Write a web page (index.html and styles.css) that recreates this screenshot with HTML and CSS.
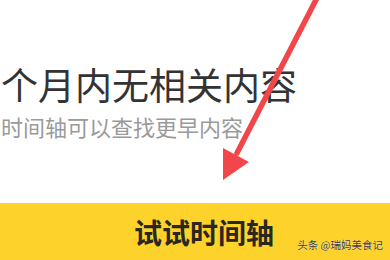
FILE: index.html
```html
<!DOCTYPE html>
<html lang="zh">
<head>
<meta charset="utf-8">
<link rel="stylesheet" href="styles.css">
</head>
<body>
<div class="page">
  <div class="content">
    <div class="title">个月内无相关内容</div>
    <div class="sub">时间轴可以查找更早内容</div>
  </div>
  <div class="bar">
    <span class="bar-text">试试时间轴</span>
    <span class="mark">头条 @瑞妈美食记</span>
  </div>
  <svg class="arrow" width="390" height="200" viewBox="0 0 390 200">
    <line x1="318" y1="-4" x2="237" y2="153" stroke="#f2474a" stroke-width="5.5" stroke-linecap="round"/>
    <polygon points="223,180 223,148 249,162" fill="#f2474a"/>
  </svg>
</div>
</body>
</html>
```

FILE: styles.css
```css
html, body {
  margin: 0;
  padding: 0;
  background: #ffffff;
}
.page {
  position: relative;
  width: 390px;
  height: 260px;
  overflow: hidden;
  font-family: "Noto Sans CJK SC", "Noto Sans", sans-serif;
  display: flex;
  flex-direction: column;
}
.content {
  height: 203px;
  padding-top: 66px;
  box-sizing: border-box;
  padding-left: 1px;
}
.title {
  font-size: 37px;
  line-height: 37px;
  color: #333333;
  white-space: nowrap;
}
.sub {
  margin-top: 12px;
  font-size: 22px;
  line-height: 22px;
  color: #9a9a9a;
  white-space: nowrap;
}
.bar {
  position: relative;
  flex: 1;
  background: #fdd22a;
  display: flex;
  align-items: center;
  justify-content: center;
  padding-left: 18px;
}
.bar-text {
  font-size: 28px;
  line-height: 28px;
  font-weight: 700;
  color: #2a2620;
}
.mark {
  position: absolute;
  right: 7px;
  bottom: 9px;
  font-size: 10.5px;
  line-height: 12px;
  color: #3c3a36;
  text-shadow: 0 0 1px rgba(255,255,255,0.9);
}
.arrow {
  position: absolute;
  left: 0;
  top: 0;
}
```
